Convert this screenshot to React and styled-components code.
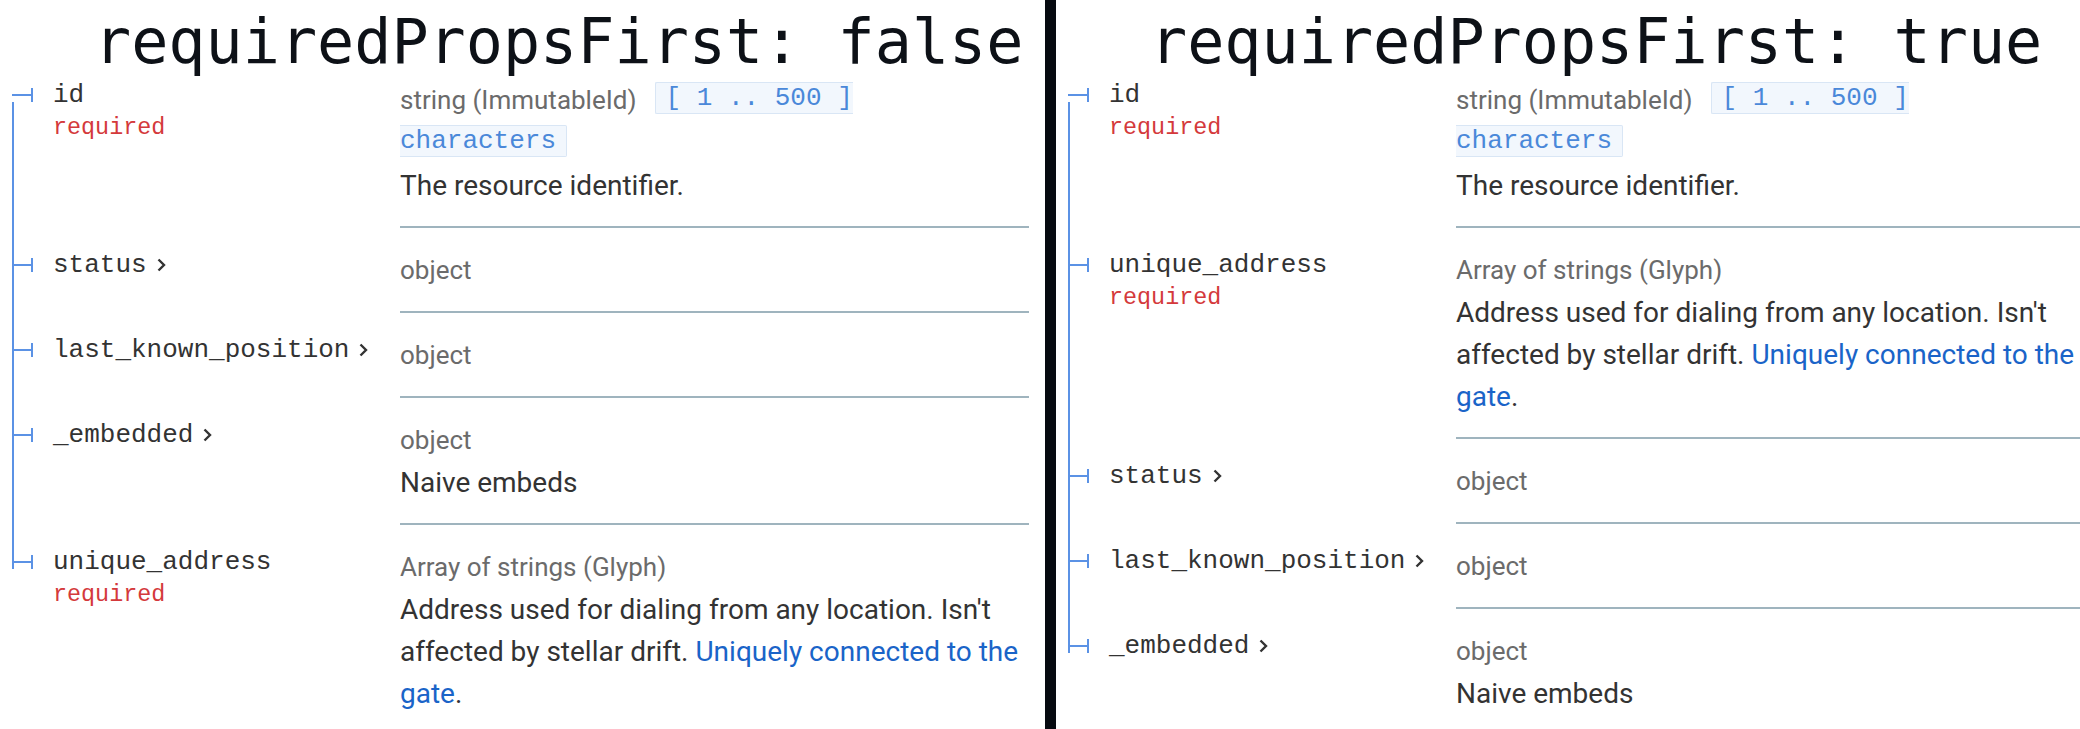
import React from 'react';
import styled, { createGlobalStyle } from 'styled-components';

const LINE = '#5b92e5';

const GlobalStyle = createGlobalStyle`
  html, body {
    margin: 0;
    padding: 0;
    background: #fff;
  }
  body {
    overflow: hidden;
  }
`;

const Page = styled.div`
  display: flex;
  width: 2080px;
  height: 729px;
  overflow: hidden;
  background: #fff;
`;

const Panel = styled.section`
  flex: 0 0 1045px;
  box-sizing: border-box;
  padding: 0 16px 0 12px;
`;

const Divider = styled.div`
  flex: 0 0 11px;
  background: #060a10;
`;

const Title = styled.h1`
  margin: 0;
  height: 58px;
  padding-left: 82px;
  font-family: "DejaVu Sans Mono", monospace;
  font-weight: 400;
  font-size: 61.75px;
  line-height: 84px;
  color: #0d1117;
  white-space: nowrap;
`;

const Table = styled.table`
  width: 100%;
  table-layout: fixed;
  border-collapse: separate;
  border-spacing: 0;
`;

const lineFor = (pos) => {
  if (pos === 'first') return `linear-gradient(to bottom, transparent 44px, ${LINE} 44px)`;
  if (pos === 'last') return `linear-gradient(to bottom, ${LINE} 44px, transparent 44px)`;
  return `linear-gradient(${LINE}, ${LINE})`;
};

const NameCell = styled.td`
  width: 388px;
  box-sizing: border-box;
  padding: 17px 20px 0 0;
  vertical-align: top;
  white-space: nowrap;
  font-family: "Liberation Mono", "Courier New", monospace;
  font-size: 26px;
  line-height: 40px;
  color: #333;
  background-image: ${({ $pos }) => lineFor($pos)};
  background-repeat: no-repeat;
  background-size: 2px 100%;
  background-position: left top;
`;

const Bullet = styled.span`
  margin-right: 20px;

  &::before {
    content: '';
    display: inline-block;
    vertical-align: middle;
    width: 19px;
    height: 2px;
    background: ${LINE};
  }

  &::after {
    content: '';
    display: inline-block;
    vertical-align: middle;
    width: 2px;
    height: 14px;
    background: ${LINE};
  }
`;

const Chevron = styled.svg`
  width: 12px;
  height: 16px;
  margin-left: 8px;
  vertical-align: middle;
`;

const Required = styled.div`
  margin-left: 41px;
  padding-top: 2px;
  font-family: "Liberation Mono", "Courier New", monospace;
  font-size: 23.4px;
  line-height: 1;
  color: #d4393b;
`;

const DetailsCell = styled.td`
  padding: 21px 0 19px;
  vertical-align: top;
  border-bottom: 2px solid #9fb4be;
`;

const TypeLine = styled.div`
  font-family: Roboto, "Liberation Sans", sans-serif;
  font-size: 26px;
  line-height: 43px;
  color: #6b6b6b;
`;

const Constraint = styled.span`
  margin-left: 18px;
  padding: 0 10px;
  vertical-align: 4px;
  font-family: "Liberation Mono", "Courier New", monospace;
  font-size: 26px;
  line-height: 34px;
  color: #4a88d9;
  background: #f2f7fd;
  border: 1px solid #d9e6f5;
  border-radius: 2px;
`;

const Description = styled.div`
  font-family: Roboto, "Liberation Sans", sans-serif;
  font-size: 28px;
  line-height: 42px;
  color: #333;
`;

const Link = styled.a`
  color: #1a64c8;
  text-decoration: none;
`;

const fields = {
  id: {
    name: 'id',
    required: true,
    type: 'string (ImmutableId)',
    constraint: true,
    desc: 'The resource identifier.',
  },
  status: { name: 'status', expandable: true, type: 'object' },
  position: { name: 'last_known_position', expandable: true, type: 'object' },
  embedded: { name: '_embedded', expandable: true, type: 'object', desc: 'Naive embeds' },
  address: {
    name: 'unique_address',
    required: true,
    type: 'Array of strings (Glyph)',
    desc: (
      <>
        Address used for dialing from any location. Isn't affected by stellar drift.{' '}
        <Link href="#">Uniquely connected to the gate</Link>.
      </>
    ),
  },
};

const ShelfIcon = () => (
  <Chevron viewBox="0 0 12 16" aria-hidden="true">
    <path d="M3.5 2.5 L9 8 L3.5 13.5" fill="none" stroke="#333" strokeWidth="2.4" />
  </Chevron>
);

function PropertyRow({ field, pos }) {
  return (
    <tr>
      <NameCell $pos={pos}>
        <Bullet />
        <span>{field.name}</span>
        {field.expandable && <ShelfIcon />}
        {field.required && <Required>required</Required>}
      </NameCell>
      <DetailsCell>
        <TypeLine>
          {field.type}
          {field.constraint && (
            <Constraint>
              [ 1 .. 500 ]<br />characters
            </Constraint>
          )}
        </TypeLine>
        {field.desc && <Description>{field.desc}</Description>}
      </DetailsCell>
    </tr>
  );
}

function SchemaPanel({ title, order }) {
  return (
    <Panel>
      <Title>{title}</Title>
      <Table>
        <tbody>
          {order.map((key, i) => (
            <PropertyRow
              key={key}
              field={fields[key]}
              pos={i === 0 ? 'first' : i === order.length - 1 ? 'last' : 'middle'}
            />
          ))}
        </tbody>
      </Table>
    </Panel>
  );
}

export default function App() {
  return (
    <>
      <GlobalStyle />
      <Page>
        <SchemaPanel
          title="requiredPropsFirst: false"
          order={['id', 'status', 'position', 'embedded', 'address']}
        />
        <Divider />
        <SchemaPanel
          title="requiredPropsFirst: true"
          order={['id', 'address', 'status', 'position', 'embedded']}
        />
      </Page>
    </>
  );
}
